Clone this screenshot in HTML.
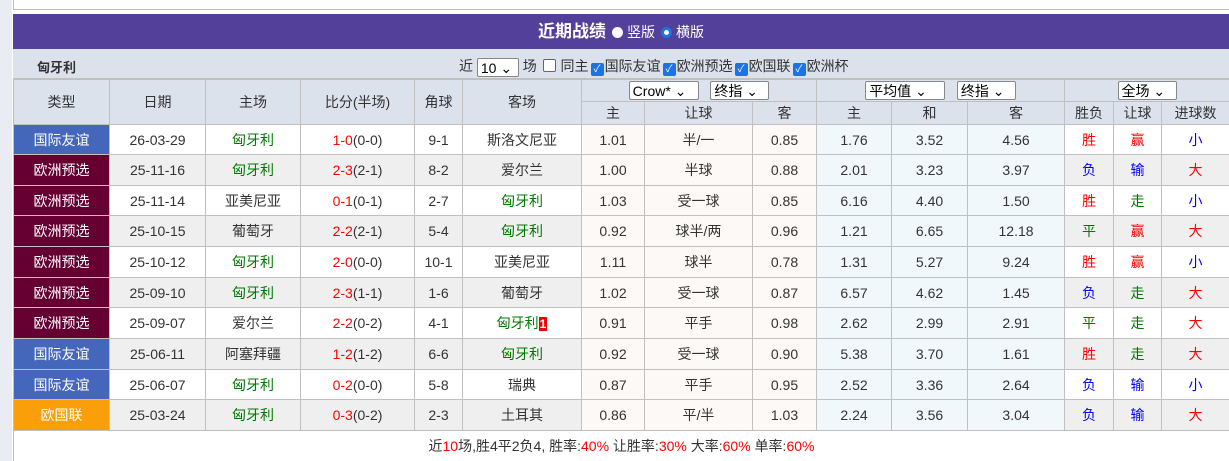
<!DOCTYPE html>
<html><head><meta charset="utf-8"><style>
body{margin:0;width:1229px;height:461px;overflow:hidden;background:#fff;font-family:"Liberation Sans","Noto Sans CJK SC",sans-serif;font-size:14px;color:#333;position:relative}
.lstrip{position:absolute;left:0;top:0;width:12px;height:461px;background:#e9edf3}
.topbox{position:absolute;left:13px;top:-1px;width:1220px;height:9px;border:1px solid #bbb;background:#fff}
.wrap{position:absolute;left:13px;top:14px;width:1216px}
.hd{height:35px;background:#52409a;color:#fff;text-align:center;line-height:35px;font-size:14px}
.hd b{font-size:17px}
.rad{display:inline-block;width:11px;height:11px;border-radius:50%;background:#fff;vertical-align:-1px;margin:0 4px 0 6px;box-sizing:border-box}
.rad.on{border:3px solid #1a73e8}
.flt{height:30px;background:#dbe2ec;position:relative;border-bottom:1px solid #c0c0c0;box-sizing:border-box}
.flt .nm{position:absolute;left:24px;top:8px;font-weight:bold;font-size:13px;color:#333}
.flt .r{position:absolute;left:446px;top:7px;font-size:14px;white-space:nowrap}
.sel{display:inline-block;border:1px solid #888;border-radius:2px;background:#fff;padding:0 3px;height:19px;line-height:19px;box-sizing:border-box;font-size:14px;color:#000;vertical-align:middle}
.cb{display:inline-block;width:13px;height:13px;border-radius:2px;vertical-align:-1px;box-sizing:border-box;margin:0 1px 0 2px}
.cb.on{background:#1a73e8;color:#fff;font-size:10px;line-height:13px;text-align:center}
.cb.off{border:1px solid #666;background:#fff}
table{border-collapse:collapse;table-layout:fixed;width:1216px}
td{border:1px solid #c0c0c0;text-align:center;padding:0;white-space:nowrap;overflow:hidden}
.th td{background:#dbe2ec;color:#333}
.t1{background:#4466bb;color:#fff}.t2{background:#660033;color:#fff}.t3{background:#fa9f0a;color:#fff}
.g{color:#070}.rd{color:#f00}.bl{color:#00f}
.o1{background:#fdf9f6}.o2{background:#f1f8fc}
tr.e td.x{background:#efefef}
.foot{height:30px;line-height:30px;text-align:center;font-size:14px;border-left:1px solid #c0c0c0}
.s1{background:#e00;color:#fff;font-weight:bold;padding:0 1px;font-size:12px}
</style></head><body>
<div class="lstrip"></div><div class="topbox"></div>
<div class="wrap">
<div class="hd"><b>近期战绩</b><span class="rad"></span>竖版<span class="rad on"></span>横版</div>
<div class="flt"><span class="nm">匈牙利</span>
<span class="r">近 <span class="sel" style="width:42px">10 ⌄</span> 场 <span class="cb off"></span> 同主<span class="cb on">✓</span>国际友谊<span class="cb on">✓</span>欧洲预选<span class="cb on">✓</span>欧国联<span class="cb on">✓</span>欧洲杯</span></div>
<table>
<colgroup><col style="width:96px"><col style="width:96px"><col style="width:95px"><col style="width:114px"><col style="width:48px"><col style="width:119px"><col style="width:63px"><col style="width:108px"><col style="width:64px"><col style="width:75px"><col style="width:76px"><col style="width:97px"><col style="width:49px"><col style="width:48px"><col style="width:68px"></colgroup>
<tr class="th" style="height:22px"><td rowspan="2">类型</td><td rowspan="2">日期</td><td rowspan="2">主场</td><td rowspan="2">比分(半场)</td><td rowspan="2">角球</td><td rowspan="2">客场</td>
<td colspan="3"><span class="sel" style="width:70px;text-align:left">Crow* ⌄</span>&nbsp;&nbsp;&nbsp;<span class="sel" style="width:59px;text-align:left">终指 ⌄</span></td>
<td colspan="3"><span class="sel" style="width:80px;text-align:left">平均值 ⌄</span>&nbsp;&nbsp;&nbsp;<span class="sel" style="width:59px;text-align:left">终指 ⌄</span></td>
<td colspan="3"><span class="sel" style="width:59px;text-align:left">全场 ⌄</span></td></tr>
<tr class="th" style="height:23px"><td>主</td><td>让球</td><td>客</td><td>主</td><td>和</td><td>客</td><td>胜负</td><td>让球</td><td>进球数</td></tr>
<tr style="height:30px"><td class="t1">国际友谊</td><td class="x">26-03-29</td><td class="x g">匈牙利</td><td class="x"><span class="rd">1-0</span>(0-0)</td><td class="x">9-1</td><td class="x">斯洛文尼亚</td><td class="o1">1.01</td><td class="o1">半/一</td><td class="o1">0.85</td><td class="o2">1.76</td><td class="o2">3.52</td><td class="o2">4.56</td><td class="x rd">胜</td><td class="x rd">赢</td><td class="x bl">小</td></tr>
<tr class="e" style="height:31px"><td class="t2">欧洲预选</td><td class="x">25-11-16</td><td class="x g">匈牙利</td><td class="x"><span class="rd">2-3</span>(2-1)</td><td class="x">8-2</td><td class="x">爱尔兰</td><td class="o1">1.00</td><td class="o1">半球</td><td class="o1">0.88</td><td class="o2">2.01</td><td class="o2">3.23</td><td class="o2">3.97</td><td class="x bl">负</td><td class="x bl">输</td><td class="x rd">大</td></tr>
<tr style="height:30px"><td class="t2">欧洲预选</td><td class="x">25-11-14</td><td class="x">亚美尼亚</td><td class="x"><span class="rd">0-1</span>(0-1)</td><td class="x">2-7</td><td class="x g">匈牙利</td><td class="o1">1.03</td><td class="o1">受一球</td><td class="o1">0.85</td><td class="o2">6.16</td><td class="o2">4.40</td><td class="o2">1.50</td><td class="x rd">胜</td><td class="x g">走</td><td class="x bl">小</td></tr>
<tr class="e" style="height:31px"><td class="t2">欧洲预选</td><td class="x">25-10-15</td><td class="x">葡萄牙</td><td class="x"><span class="rd">2-2</span>(2-1)</td><td class="x">5-4</td><td class="x g">匈牙利</td><td class="o1">0.92</td><td class="o1">球半/两</td><td class="o1">0.96</td><td class="o2">1.21</td><td class="o2">6.65</td><td class="o2">12.18</td><td class="x g">平</td><td class="x rd">赢</td><td class="x rd">大</td></tr>
<tr style="height:31px"><td class="t2">欧洲预选</td><td class="x">25-10-12</td><td class="x g">匈牙利</td><td class="x"><span class="rd">2-0</span>(0-0)</td><td class="x">10-1</td><td class="x">亚美尼亚</td><td class="o1">1.11</td><td class="o1">球半</td><td class="o1">0.78</td><td class="o2">1.31</td><td class="o2">5.27</td><td class="o2">9.24</td><td class="x rd">胜</td><td class="x rd">赢</td><td class="x bl">小</td></tr>
<tr class="e" style="height:30px"><td class="t2">欧洲预选</td><td class="x">25-09-10</td><td class="x g">匈牙利</td><td class="x"><span class="rd">2-3</span>(1-1)</td><td class="x">1-6</td><td class="x">葡萄牙</td><td class="o1">1.02</td><td class="o1">受一球</td><td class="o1">0.87</td><td class="o2">6.57</td><td class="o2">4.62</td><td class="o2">1.45</td><td class="x bl">负</td><td class="x g">走</td><td class="x rd">大</td></tr>
<tr style="height:31px"><td class="t2">欧洲预选</td><td class="x">25-09-07</td><td class="x">爱尔兰</td><td class="x"><span class="rd">2-2</span>(0-2)</td><td class="x">4-1</td><td class="x"><span class="g">匈牙利</span><span class="s1">1</span></td><td class="o1">0.91</td><td class="o1">平手</td><td class="o1">0.98</td><td class="o2">2.62</td><td class="o2">2.99</td><td class="o2">2.91</td><td class="x g">平</td><td class="x g">走</td><td class="x rd">大</td></tr>
<tr class="e" style="height:31px"><td class="t1">国际友谊</td><td class="x">25-06-11</td><td class="x">阿塞拜疆</td><td class="x"><span class="rd">1-2</span>(1-2)</td><td class="x">6-6</td><td class="x g">匈牙利</td><td class="o1">0.92</td><td class="o1">受一球</td><td class="o1">0.90</td><td class="o2">5.38</td><td class="o2">3.70</td><td class="o2">1.61</td><td class="x rd">胜</td><td class="x g">走</td><td class="x rd">大</td></tr>
<tr style="height:30px"><td class="t1">国际友谊</td><td class="x">25-06-07</td><td class="x g">匈牙利</td><td class="x"><span class="rd">0-2</span>(0-0)</td><td class="x">5-8</td><td class="x">瑞典</td><td class="o1">0.87</td><td class="o1">平手</td><td class="o1">0.95</td><td class="o2">2.52</td><td class="o2">3.36</td><td class="o2">2.64</td><td class="x bl">负</td><td class="x bl">输</td><td class="x bl">小</td></tr>
<tr class="e" style="height:31px"><td class="t3">欧国联</td><td class="x">25-03-24</td><td class="x g">匈牙利</td><td class="x"><span class="rd">0-3</span>(0-2)</td><td class="x">2-3</td><td class="x">土耳其</td><td class="o1">0.86</td><td class="o1">平/半</td><td class="o1">1.03</td><td class="o2">2.24</td><td class="o2">3.56</td><td class="o2">3.04</td><td class="x bl">负</td><td class="x bl">输</td><td class="x rd">大</td></tr>
</table>
<div class="foot">近<span class="rd">10</span>场,胜4平2负4, 胜率:<span class="rd">40%</span> 让胜率:<span class="rd">30%</span> 大率:<span class="rd">60%</span> 单率:<span class="rd">60%</span></div>
</div>
</body></html>
